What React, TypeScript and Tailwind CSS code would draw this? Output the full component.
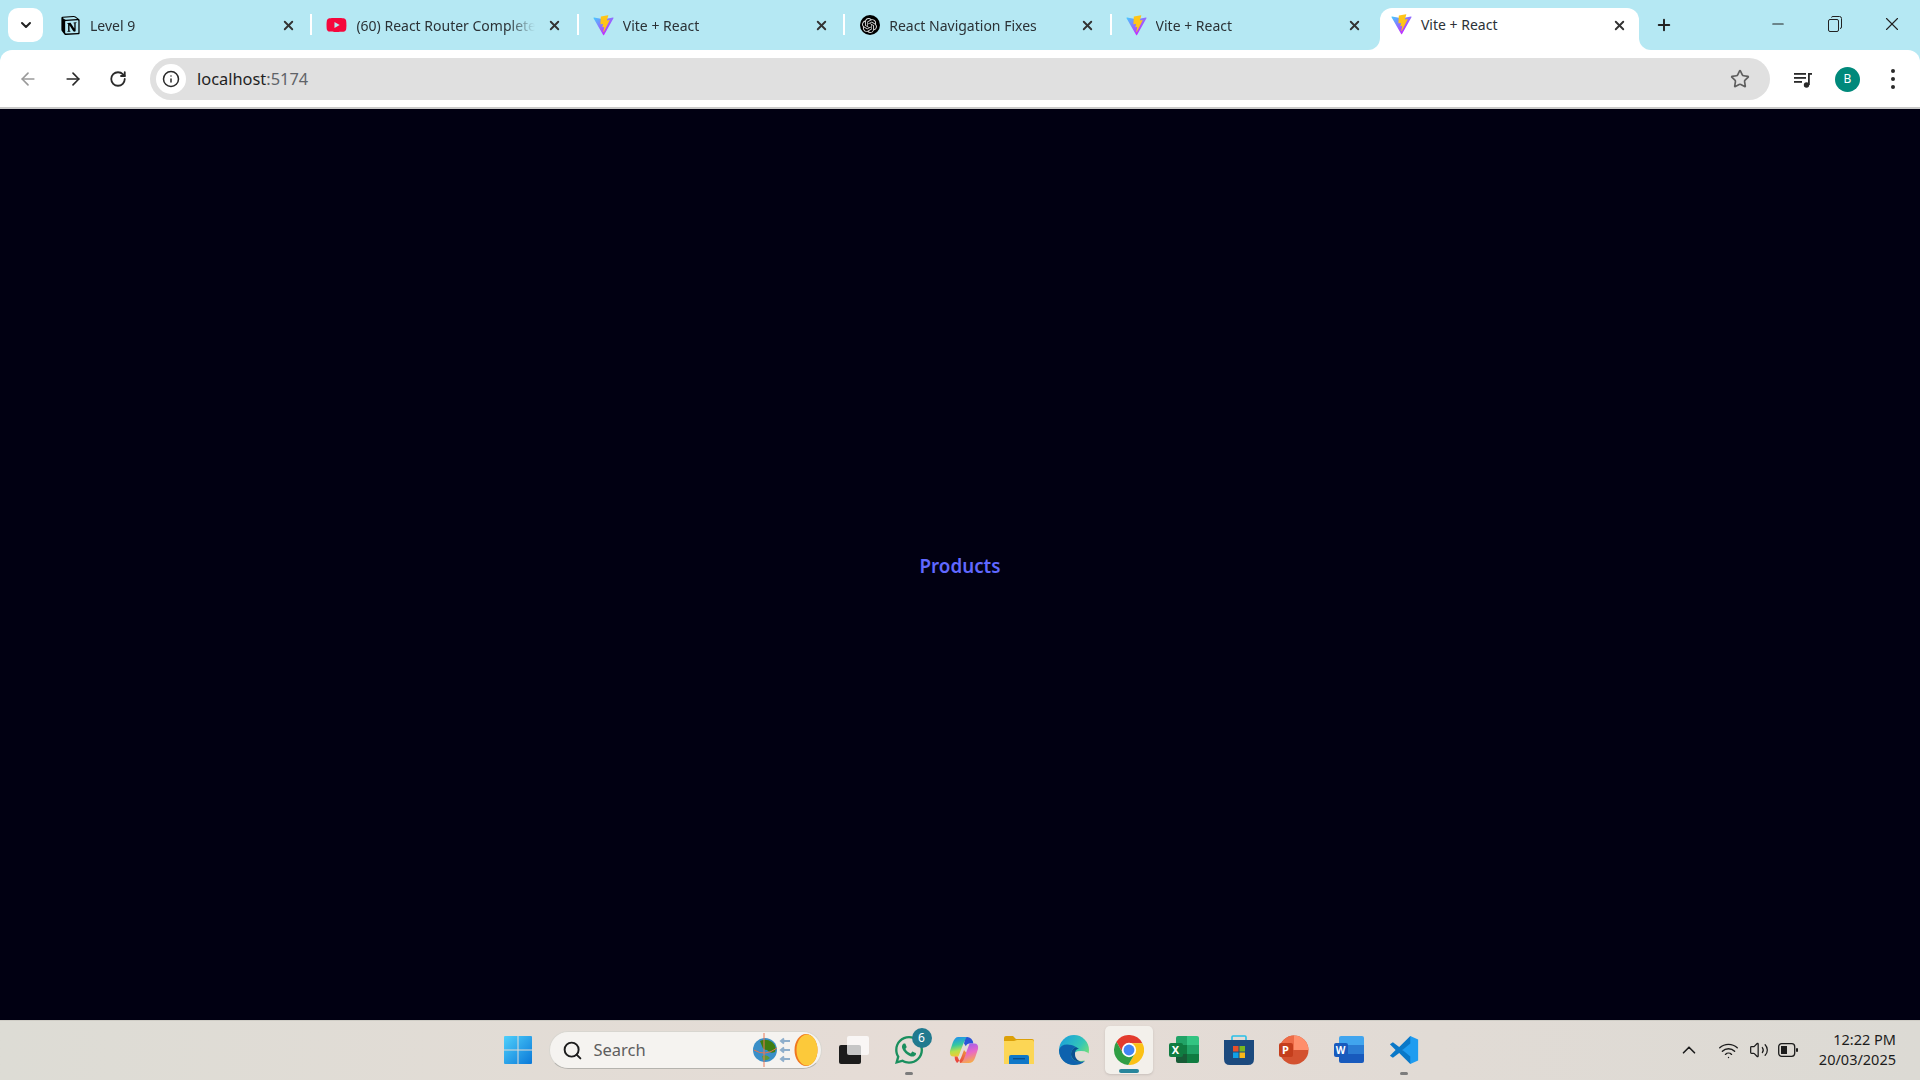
import { ArrowLeft, ArrowRight, ChevronDown, ChevronUp, Info, Minus, Plus, RotateCw, Search, Star, Volume2, Wifi, X } from "lucide-react";
import { FaWhatsapp, FaYoutube } from "react-icons/fa";
import { SiNotion, SiOpenai } from "react-icons/si";

const ViteIcon = ({ id }: { id: string }) => (
  <svg width="21" height="21" viewBox="0 0 410 404" fill="none">
    <defs>
      <linearGradient id={id} x1="6" y1="33" x2="235" y2="344" gradientUnits="userSpaceOnUse">
        <stop stopColor="#41D1FF" />
        <stop offset="1" stopColor="#BD34FE" />
      </linearGradient>
    </defs>
    <path
      d="M399.641 59.5246L215.643 388.545C211.844 395.338 202.084 395.378 198.228 388.618L10.5817 59.5563C6.38087 52.1896 12.6802 43.2665 21.0281 44.7586L205.223 77.6824C206.398 77.8924 207.601 77.8904 208.776 77.6763L389.119 44.8058C397.439 43.2894 403.768 52.1434 399.641 59.5246Z"
      fill={`url(#${id})`}
    />
    <path
      d="M292.965 1.5744L156.801 28.2552C154.563 28.6937 152.906 30.5903 152.771 32.8664L144.395 174.33C144.198 177.662 147.258 180.248 150.51 179.498L188.42 170.749C191.967 169.931 195.172 173.055 194.443 176.622L183.18 231.775C182.422 235.487 185.907 238.661 189.532 237.56L212.947 230.446C216.577 229.344 220.065 232.527 219.297 236.242L201.398 322.875C200.278 328.294 207.486 331.249 210.492 326.603L212.5 323.5L323.454 102.072C325.312 98.3645 322.108 94.137 318.036 94.9228L279.014 102.454C275.347 103.161 272.227 99.746 273.262 96.1583L298.731 7.86689C299.767 4.27314 296.636 0.855181 292.965 1.5744Z"
      fill="#FFC517"
    />
  </svg>
);

const tabs = [
  { title: "Level 9", icon: <SiNotion size={19} className="text-black" /> },
  { title: "(60) React Router Complete", icon: <FaYoutube size={22} className="text-[#f5073c]" /> },
  { title: "Vite + React", icon: <ViteIcon id="vite-a" /> },
  {
    title: "React Navigation Fixes",
    icon: (
      <span className="flex h-5 w-5 items-center justify-center rounded-full bg-black">
        <SiOpenai size={15} className="text-[#d8d8d8]" />
      </span>
    ),
  },
  { title: "Vite + React", icon: <ViteIcon id="vite-b" /> },
];

const TabStrip = () => (
  <div className="flex h-[50px] shrink-0 bg-[#b5e8f3] pl-[8px]">
    <div className="mt-[8px] mr-[3px] flex h-[34px] w-[35px] items-center justify-center rounded-[10px] bg-white">
      <ChevronDown size={16} strokeWidth={3} className="text-[#222]" />
    </div>
    {tabs.map((tab, i) => (
      <div key={i} className="relative mt-[8px] flex h-[34px] w-[266.4px] items-center pl-[14px]">
        <span className="flex w-[21px] shrink-0 justify-center">{tab.icon}</span>
        <span className="ml-[9px] w-[179px] overflow-hidden whitespace-nowrap text-[14px] text-[#2b3236] [mask-image:linear-gradient(to_right,black_85%,transparent)]">
          {tab.title}
        </span>
        <X size={15} strokeWidth={3} className="ml-[12px] shrink-0 text-[#333]" />
        {i !== 4 && <span className="absolute top-[6px] right-0 h-[21px] w-[2px] bg-white" />}
      </div>
    ))}
    {/* active tab */}
    <div className="relative mt-[8px] ml-[2px] flex h-[42px] w-[259px] items-start rounded-t-[12px] bg-white pt-[6px] pl-[11px]">
      <div className="absolute bottom-0 -left-[12px] h-[12px] w-[12px] bg-white">
        <div className="h-full w-full rounded-br-[12px] bg-[#b5e8f3]" />
      </div>
      <div className="absolute -right-[12px] bottom-0 h-[12px] w-[12px] bg-white">
        <div className="h-full w-full rounded-bl-[12px] bg-[#b5e8f3]" />
      </div>
      <ViteIcon id="vite-c" />
      <span className="ml-[9px] w-[179px] whitespace-nowrap text-[14px] text-[#2b3236]">Vite + React</span>
      <X size={15} strokeWidth={3} className="mt-[4px] ml-[12px] shrink-0 text-[#333]" />
    </div>
    <div className="mt-[15px] ml-[15px] flex h-[20px] w-[20px] items-center justify-center">
      <Plus size={18} strokeWidth={2.6} className="text-[#222]" />
    </div>
    <div className="ml-auto flex h-[48px] items-center">
      <div className="flex w-[57px] justify-center">
        <Minus size={18} strokeWidth={1.4} className="text-[#222]" />
      </div>
      <div className="flex w-[57px] justify-center">
        <svg width="14" height="16" viewBox="0 0 14 16" fill="none" stroke="#222" strokeWidth="1">
          <rect x="0.5" y="3.5" width="10" height="12" rx="1.5" />
          <path d="M3.5 1.5 Q3.5 0.5 5 0.5 H11.5 Q13.5 0.5 13.5 2.5 V11 Q13.5 12.5 12 12.5" />
        </svg>
      </div>
      <div className="flex w-[57px] justify-center">
        <X size={22} strokeWidth={1.2} className="text-[#222]" />
      </div>
    </div>
  </div>
);

const Toolbar = () => (
  <div className="flex h-[59px] shrink-0 bg-[#b5e8f3]">
    <div className="flex h-full w-full items-start rounded-t-[12px] border-b-2 border-[#c9c9c9] bg-white pt-[8px] pl-[5px]">
      <div className="flex h-[42px] w-[45px] items-center justify-center">
        <ArrowLeft size={20} className="text-[#9a9a9a]" />
      </div>
      <div className="flex h-[42px] w-[45px] items-center justify-center">
        <ArrowRight size={20} className="text-[#2a2a2a]" />
      </div>
      <div className="flex h-[42px] w-[45px] items-center justify-center">
        <RotateCw size={18} strokeWidth={2.4} className="text-[#2a2a2a]" />
      </div>
      <div className="ml-[10px] flex h-[42px] w-[1620px] items-center rounded-full bg-[#e0e0e0] pr-[20px] pl-[6px]">
        <div className="flex h-[30px] w-[30px] items-center justify-center rounded-full bg-white">
          <Info size={18} className="text-[#2a2a2a]" />
        </div>
        <span className="ml-[11px] pt-[1px] text-[16.4px] text-[#1f1f1f]">
          localhost<span className="text-[#5f6368]">:5174</span>
        </span>
        <Star size={20} strokeWidth={2} className="ml-auto text-[#5f5f5f]" />
      </div>
      <div className="ml-[10px] flex h-[42px] w-[45px] items-center justify-center">
        <svg width="20" height="20" viewBox="0 0 20 20" fill="#2a2a2a">
          <rect x="1" y="4" width="12" height="1.8" />
          <rect x="1" y="8" width="12" height="1.8" />
          <rect x="1" y="12" width="8" height="1.8" />
          <circle cx="13.5" cy="16" r="2.7" />
          <rect x="15" y="4" width="1.8" height="12" />
          <rect x="15" y="4" width="4" height="1.8" />
        </svg>
      </div>
      <div className="flex h-[42px] w-[45px] items-center justify-center">
        <span className="flex h-[25px] w-[25px] items-center justify-center rounded-full bg-[#00897b] text-[12px] text-white">B</span>
      </div>
      <div className="flex h-[42px] w-[45px] flex-col items-center justify-center gap-[4px]">
        <span className="h-[4px] w-[4px] rounded-full bg-[#2a2a2a]" />
        <span className="h-[4px] w-[4px] rounded-full bg-[#2a2a2a]" />
        <span className="h-[4px] w-[4px] rounded-full bg-[#2a2a2a]" />
      </div>
    </div>
  </div>
);

const WindowsLogo = () => (
  <svg width="30" height="30" viewBox="0 0 30 30">
    <defs>
      <linearGradient id="win" x1="0" y1="0" x2="1" y2="1">
        <stop stopColor="#4fd0fb" />
        <stop offset="1" stopColor="#0a78d8" />
      </linearGradient>
    </defs>
    <path d="M1 2 Q1 1 2 1 H14.5 V14.5 H1Z M15.5 1 H28 Q29 1 29 2 V14.5 H15.5Z M1 15.5 H14.5 V29 H2 Q1 29 1 28Z M15.5 15.5 H29 V28 Q29 29 28 29 H15.5Z" fill="url(#win)" />
  </svg>
);

const SeasonWidget = () => (
  <svg width="66" height="36" viewBox="0 0 66 36">
    <circle cx="13" cy="18" r="12" fill="#3a8fc8" />
    <path d="M8 9 Q14 6 20 10 Q25 14 23 20 Q18 22 15 18 Q11 18 10 14Z" fill="#3f7d12" />
    <path d="M10 24 Q15 22 18 26 Q15 29 11 28Z" fill="#5f9a35" />
    <path d="M2 18 Q13 25 25 16" stroke="#e8714f" strokeWidth="1" fill="none" />
    <path d="M12 1 V35" stroke="#ea7a5a" strokeWidth="1" />
    <g stroke="#8eaecb" strokeWidth="2" fill="none">
      <path d="M38 9 H29 M32 6.5 L29 9 L32 11.5" />
      <path d="M38 18 H29 M32 15.5 L29 18 L32 20.5" />
      <path d="M38 27 H29 M32 24.5 L29 27 L32 29.5" />
    </g>
    <ellipse cx="54" cy="18" rx="11.5" ry="16" fill="#f0781f" />
    <ellipse cx="55" cy="18" rx="10.5" ry="15.5" fill="#fcc93a" />
  </svg>
);

const TaskView = () => (
  <svg width="30" height="28" viewBox="0 0 30 28">
    <rect x="0" y="9" width="22" height="19" rx="2" fill="#1c1c1c" />
    <rect x="8" y="0" width="22" height="19" rx="2" fill="#ffffff" fillOpacity="0.75" />
  </svg>
);

const Copilot = () => (
  <svg width="30" height="28" viewBox="0 0 32 30">
    <defs>
      <linearGradient id="cop-a" x1="0.3" y1="0" x2="0.5" y2="1">
        <stop stopColor="#1f8ff0" />
        <stop offset="0.4" stopColor="#35c8a0" />
        <stop offset="0.7" stopColor="#b8e04a" />
        <stop offset="1" stopColor="#f8c630" />
      </linearGradient>
      <linearGradient id="cop-b" x1="0.3" y1="0" x2="0.6" y2="1">
        <stop stopColor="#9a5cf0" />
        <stop offset="0.5" stopColor="#e868c8" />
        <stop offset="1" stopColor="#f8b040" />
      </linearGradient>
      <linearGradient id="cop-c" x1="0.8" y1="0" x2="0.2" y2="1">
        <stop stopColor="#f09040" />
        <stop offset="1" stopColor="#e83a3a" />
      </linearGradient>
    </defs>
    <path d="M10 1 H21 Q17 3 15 9 L10 22 H5 Q0 22 1 16 L4 7 Q6 1 10 1Z" fill="url(#cop-a)" />
    <path d="M19 1 Q25 1 26 8 H22 Q19 8 18 11 L16 8 Q17 3 19 1Z" fill="#2a55d8" />
    <path d="M21 29 H11 Q15 27 17 21 L22 8 H27 Q32 8 31 14 L28 23 Q26 29 21 29Z" fill="url(#cop-b)" />
    <path d="M16 15 L13 23 Q11 28 7 29 H12 Q15 28 17 22 L18.5 18Z M9 22 L12 29 H10 Q6 28 6 22Z" fill="url(#cop-c)" />
  </svg>
);

const Explorer = () => (
  <svg width="30" height="28" viewBox="0 0 30 28">
    <path d="M0 2 Q0 0 2 0 H9 L12 3 H28 Q30 3 30 5 V8 H0Z" fill="#dca008" />
    <path d="M0 5 H10 L13 4 H28 Q30 4 30 6 V28 H0Z" fill="#fcd655" />
    <path d="M5 21 Q5 19 7 19 H23 Q25 19 25 21 V28 H5Z" fill="#1078c8" />
    <rect x="9" y="22" width="12" height="1.4" fill="#0b4f8c" />
  </svg>
);

const Edge = () => (
  <svg width="30" height="30" viewBox="0 0 30 30">
    <defs>
      <linearGradient id="edge-a" x1="0.1" y1="0" x2="1" y2="0.7">
        <stop stopColor="#1a9fdc" />
        <stop offset="0.6" stopColor="#33c6b8" />
        <stop offset="1" stopColor="#7fe36b" />
      </linearGradient>
    </defs>
    <circle cx="15" cy="15" r="15" fill="url(#edge-a)" />
    <ellipse cx="22" cy="21" rx="9" ry="5" fill="#e2dcd5" />
    <path d="M0 15 C0 24 7 30 15 30 C19 30 23 29 26 26 C20 28 12 26 12 19 C12 16 14 13 17 12 C9 8 2 9 0 15Z" fill="#0e62ae" />
    <path d="M17 12 C14 13 12 16 12 19 C12 24 17 27 22 27 C18 25 16 23 16 19 C16 16 17 14 20 14Z" fill="#0a4f91" />
  </svg>
);

const Chrome = () => (
  <svg width="30" height="30" viewBox="2 2 44 44">
    <path d="M24 14 L43.6 14 A22 22 0 0 0 5.54 12.03 L15.34 29Z" fill="#e33b2e" />
    <path d="M32.66 29 L22.86 45.97 A22 22 0 0 0 43.6 14 L24 14Z" fill="#fbc116" />
    <path d="M15.34 29 L5.54 12.03 A22 22 0 0 0 22.86 45.97 L32.66 29Z" fill="#2f9e44" />
    <circle cx="24" cy="24" r="10.5" fill="#ffffff" />
    <circle cx="24" cy="24" r="8" fill="#4285f4" />
  </svg>
);

const Excel = () => (
  <div className="relative h-[30px] w-[30px]">
    <div className="absolute top-[1px] right-0 grid h-[27px] w-[23px] grid-cols-2 grid-rows-3 overflow-hidden rounded-[2px]">
      <div className="bg-[#21a366]" />
      <div className="bg-[#33c481]" />
      <div className="bg-[#107c41]" />
      <div className="bg-[#21a366]" />
      <div className="bg-[#185c37]" />
      <div className="bg-[#107c41]" />
    </div>
    <div className="absolute top-[8px] left-0 flex h-[14px] w-[14px] items-center justify-center rounded-[2px] bg-[#107c41] text-[11px] font-bold text-white">
      X
    </div>
  </div>
);

const Store = () => (
  <svg width="30" height="30" viewBox="0 0 30 30">
    <path d="M8 5 V2 Q8 1 9 1 H21 Q22 1 22 2 V5" fill="none" stroke="#29c0e8" strokeWidth="1.6" />
    <path d="M0 5 H30 V24 Q30 30 24 30 H6 Q0 30 0 24Z" fill="#1c4a7e" />
    <rect x="9" y="11" width="5.5" height="5.5" fill="#e8502a" />
    <rect x="15.5" y="11" width="5.5" height="5.5" fill="#7ab81f" />
    <rect x="9" y="17.5" width="5.5" height="5.5" fill="#10a0e8" />
    <rect x="15.5" y="17.5" width="5.5" height="5.5" fill="#f8b818" />
  </svg>
);

const PowerPoint = () => (
  <div className="relative h-[30px] w-[30px]">
    <svg width="30" height="30" viewBox="0 0 30 30" className="absolute inset-0">
      <circle cx="15" cy="15" r="14.5" fill="#d35230" />
      <path d="M15 0.5 A14.5 14.5 0 0 1 29.5 15 H15Z" fill="#ff8f6b" />
      <path d="M15 0.5 A14.5 14.5 0 0 0 0.5 15 H15Z" fill="#ed6c47" />
    </svg>
    <div className="absolute top-[8px] left-0 flex h-[14px] w-[14px] items-center justify-center rounded-[2px] bg-[#c43e1c] text-[11px] font-bold text-white">
      P
    </div>
  </div>
);

const Word = () => (
  <div className="relative h-[30px] w-[30px]">
    <div className="absolute top-[1px] right-0 grid h-[27px] w-[25px] grid-rows-3 overflow-hidden rounded-[2px]">
      <div className="bg-[#41a5ee]" />
      <div className="bg-[#2b7cd3]" />
      <div className="bg-[#185abd]" />
    </div>
    <div className="absolute top-[8px] left-0 flex h-[14px] w-[14px] items-center justify-center rounded-[2px] bg-[#185abd] text-[10px] font-bold text-white">
      W
    </div>
  </div>
);

const VsCode = () => (
  <svg width="30" height="30" viewBox="0 0 100 100">
    <path d="M71 3 L97 15 V85 L71 97 L45 50Z" fill="#1f9cf0" />
    <path d="M71 3 L34 40 L13 24 L3 31 L22 50 L3 69 L13 76 L34 60 L71 97 V72 L45 50 L71 28Z" fill="#0a78c8" />
  </svg>
);

const taskbarApps = [
  { name: "task-view", icon: <TaskView /> },
  {
    name: "whatsapp",
    dot: true,
    icon: (
      <div className="relative">
        <FaWhatsapp size={32} className="text-[#1a8f5e]" />
        <span className="absolute -top-[6px] -right-[7px] flex h-[20px] w-[20px] items-center justify-center rounded-full bg-[#217a8f] text-[12px] text-white">
          6
        </span>
      </div>
    ),
  },
  { name: "copilot", icon: <Copilot /> },
  { name: "explorer", icon: <Explorer /> },
  { name: "edge", icon: <Edge /> },
  { name: "chrome", active: true, icon: <Chrome /> },
  { name: "excel", icon: <Excel /> },
  { name: "store", icon: <Store /> },
  { name: "powerpoint", icon: <PowerPoint /> },
  { name: "word", icon: <Word /> },
  { name: "vscode", dot: true, icon: <VsCode /> },
];

const Taskbar = () => (
  <div className="flex h-[60px] shrink-0 items-center border-t border-[#cfcdc6] bg-gradient-to-r from-[#dddcd5] via-[#e6dcd6] to-[#dcdad4] pb-[1px]">
    <div className="flex-1" />
    <div className="ml-[2px] flex items-center gap-[7px]">
      <div className="-ml-[1px] flex h-[48px] w-[48px] items-center justify-center">
        <WindowsLogo />
      </div>
      <div className="mr-[1px] flex h-[38px] w-[273px] items-center rounded-full border border-[#d8d6d0] border-b-[#b5b3ae] bg-[#f5f3f0] pr-[3px] pl-[12px]">
        <Search size={21} strokeWidth={2.2} className="text-[#1c1c1c]" />
        <span className="ml-[11px] text-[16.5px] text-[#5e5e5e]">Search</span>
        <span className="ml-auto flex">
          <SeasonWidget />
        </span>
      </div>
      {taskbarApps.map((app) => (
        <div
          key={app.name}
          className={`relative flex h-[48px] w-[48px] items-center justify-center rounded-[5px] ${app.active ? "bg-[#f3f0eb] shadow-sm" : ""}`}
        >
          {app.icon}
          {app.active && <span className="absolute bottom-[1px] h-[4px] w-[20px] rounded-full bg-[#28869c]" />}
          {app.dot && <span className="absolute -bottom-[1px] h-[3px] w-[8px] rounded-full bg-[#7c7c7c]" />}
        </div>
      ))}
    </div>
    <div className="flex flex-1 items-center justify-end text-[#1c1c1c]">
      <ChevronUp size={22} strokeWidth={1.8} className="mr-[18px]" />
      <Wifi size={21} strokeWidth={1.6} className="mr-[10px]" />
      <Volume2 size={20} strokeWidth={1.5} className="mr-[9px]" />
      <svg width="20" height="14" viewBox="0 0 20 14" fill="none" className="mr-[21px]">
        <rect x="0.7" y="0.7" width="16" height="12.6" rx="3" stroke="#1c1c1c" strokeWidth="1.3" />
        <rect x="3" y="3" width="6" height="8" fill="#1c1c1c" />
        <rect x="18" y="5" width="2" height="4" rx="1" fill="#1c1c1c" />
      </svg>
      <div className="mr-[24px] -translate-y-[1px] text-right text-[14.5px] leading-[20px]">
        <div>12:22 PM</div>
        <div>20/03/2025</div>
      </div>
    </div>
  </div>
);

export default function App() {
  return (
    <div className="flex h-screen w-full flex-col overflow-hidden font-['Noto_Sans',sans-serif]">
      <TabStrip />
      <Toolbar />
      <main className="flex flex-1 items-center justify-center bg-[#010012] pt-[3px]">
        <a className="text-[18.8px] font-semibold text-[#6068ff]">Products</a>
      </main>
      <Taskbar />
    </div>
  );
}
